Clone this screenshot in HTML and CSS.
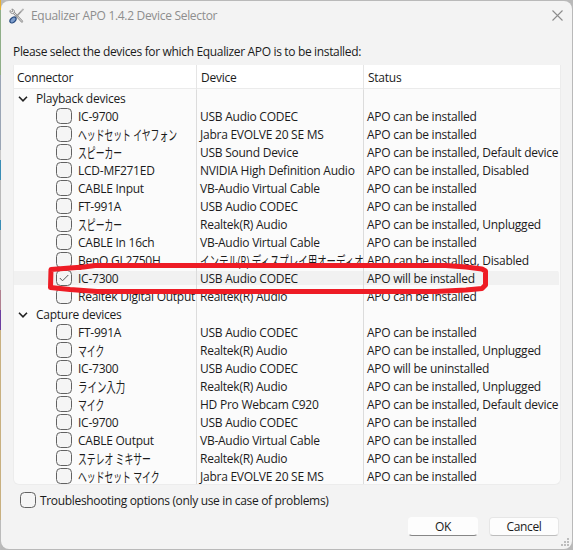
FILE: index.html
```html
<!DOCTYPE html>
<html lang="en">
<head>
<meta charset="UTF-8">
<title>Equalizer APO 1.4.2 Device Selector</title>
<link rel="stylesheet" href="styles.css">
</head>
<body>

<div class="window">
  <div class="titlebar">
    <svg class="app-icon" width="16" height="16" viewBox="0 0 16 16" fill="none">
      <path d="M4.5 4.5L13 13.5" stroke="#8a8a8a" stroke-width="2.4" stroke-linecap="round"/>
      <path d="M4.5 4.5L13 13.5" stroke="#e4e4e4" stroke-width="1" stroke-linecap="round"/>
      <path d="M1 2.5C.5 5 3 6.500 5 5C6.200 3.500 5 1 2.800 1L4 3L2.800 4Z" fill="#eee" stroke="#8a8a8a" stroke-width=".9"/>
      <path d="M6.500 9.500L12 3.500L14.500 1" stroke="#999" stroke-width="1.700"/>
      <path d="M12 3.500L14.700 .8" stroke="#ddd" stroke-width=".8"/>
      <ellipse cx="4" cy="12" rx="3.500" ry="2.300" transform="rotate(-42 4 12)" fill="#7f9fce" stroke="#24497f" stroke-width="1.200"/>
    </svg>
    <span class="title">Equalizer APO 1.4.2 Device Selector</span>
    <svg class="close" width="11" height="11" viewBox="0 0 11 11"><path d="M.5 .5L10.500 10.500M10.500 .5L.5 10.500" stroke="#8c8c8c" stroke-width="1.100"/></svg>
  </div>

  <p class="prompt">Please select the devices for which Equalizer APO is to be installed:</p>

  <div class="tree">
    <div class="head"><span>Connector</span><span>Device</span><span>Status</span></div>
    <div class="body">
      <div class="row group"><span><svg width="10" height="6" viewBox="0 0 10 6"><path d="M1 .8L5 4.800L9 .8" fill="none" stroke="#222" stroke-width="1.600"/></svg>Playback devices</span><span></span><span></span></div>
      <div class="row"><span><i class="box"></i>IC-9700</span><span>USB Audio CODEC</span><span>APO can be installed</span></div>
      <div class="row"><span><i class="box"></i><b class="jp">ヘッドセット イヤフォン</b></span><span>Jabra EVOLVE 20 SE MS</span><span>APO can be installed</span></div>
      <div class="row"><span><i class="box"></i><b class="jp">スピーカー</b></span><span>USB Sound Device</span><span>APO can be installed, Default device</span></div>
      <div class="row"><span><i class="box"></i>LCD-MF271ED</span><span>NVIDIA High Definition Audio</span><span>APO can be installed, Disabled</span></div>
      <div class="row"><span><i class="box"></i>CABLE Input</span><span>VB-Audio Virtual Cable</span><span>APO can be installed</span></div>
      <div class="row"><span><i class="box"></i>FT-991A</span><span>USB Audio CODEC</span><span>APO can be installed</span></div>
      <div class="row"><span><i class="box"></i><b class="jp">スピーカー</b></span><span>Realtek(R) Audio</span><span>APO can be installed, Unplugged</span></div>
      <div class="row"><span><i class="box"></i>CABLE In 16ch</span><span>VB-Audio Virtual Cable</span><span>APO can be installed</span></div>
      <div class="row"><span><i class="box"></i>BenQ GL2750H</span><span><b class="jp wide">インテル(R) ディスプレイ用オーディオ</b></span><span>APO can be installed, Disabled</span></div>
      <div class="row selected"><span><i class="box"><svg width="10" height="8" viewBox="0 0 10 8"><path d="M.8 4L3.500 6.800L9.300 1" fill="none" stroke="#555" stroke-width="1"/></svg></i>IC-7300</span><span>USB Audio CODEC</span><span>APO will be installed</span></div>
      <div class="row"><span><i class="box"></i>Realtek Digital Output</span><span>Realtek(R) Audio</span><span>APO can be installed</span></div>
      <div class="row group"><span><svg width="10" height="6" viewBox="0 0 10 6"><path d="M1 .8L5 4.800L9 .8" fill="none" stroke="#222" stroke-width="1.600"/></svg>Capture devices</span><span></span><span></span></div>
      <div class="row"><span><i class="box"></i>FT-991A</span><span>USB Audio CODEC</span><span>APO can be installed</span></div>
      <div class="row"><span><i class="box"></i><b class="jp">マイク</b></span><span>Realtek(R) Audio</span><span>APO can be installed, Unplugged</span></div>
      <div class="row"><span><i class="box"></i>IC-7300</span><span>USB Audio CODEC</span><span>APO will be uninstalled</span></div>
      <div class="row"><span><i class="box"></i><b class="jp wide">ライン入力</b></span><span>Realtek(R) Audio</span><span>APO can be installed, Unplugged</span></div>
      <div class="row"><span><i class="box"></i><b class="jp">マイク</b></span><span>HD Pro Webcam C920</span><span>APO can be installed, Default device</span></div>
      <div class="row"><span><i class="box"></i>IC-9700</span><span>USB Audio CODEC</span><span>APO can be installed</span></div>
      <div class="row"><span><i class="box"></i>CABLE Output</span><span>VB-Audio Virtual Cable</span><span>APO can be installed</span></div>
      <div class="row"><span><i class="box"></i><b class="jp">ステレオ ミキサー</b></span><span>Realtek(R) Audio</span><span>APO can be installed</span></div>
      <div class="row"><span><i class="box"></i><b class="jp">ヘッドセット マイク</b></span><span>Jabra EVOLVE 20 SE MS</span><span>APO can be installed</span></div>
    </div>
  </div>

  <label class="trouble"><i class="box"></i>Troubleshooting options (only use in case of problems)</label>

  <div class="buttons">
    <button class="ok">OK</button>
    <button>Cancel</button>
  </div>

  <svg class="grip" width="8" height="8" viewBox="0 0 8 8" fill="#bdbdbd"><path d="M6 0h2v2h-2zM3 3h2v2h-2zM6 3h2v2h-2zM0 6h2v2h-2zM3 6h2v2h-2zM6 6h2v2h-2z"/></svg>
</div>

<!-- hand drawn marker round the checked device -->
<svg class="marker" width="573" height="550" viewBox="0 0 573 550">
  <path d="M84 267L70 268L51 269.500L50.500 287.500L70 289.500L97 291.500H436L466 290L482 288.500L485.500 285V271L482 269L466 267L446 265.500H95L80 267.500" fill="none" stroke="#ee1c25" stroke-width="5" stroke-linejoin="round" stroke-linecap="round"/>
</svg>

</body>
</html>
```
FILE: styles.css
```css
* { box-sizing: border-box; }
body {
  margin: 0;
  width: 573px;
  height: 550px;
  padding: 1px;
  overflow: hidden;
  background: linear-gradient(to right, transparent 1px, #b9b9b9 1px),
    linear-gradient(#e8b030 0 10px, #8fae88 10px 75px, #9aa5b5 75px 150px, #c8c8c8 150px 160px, #3a8db5 160px 180px, #b9b9b9 180px 220px, #3a8db5 220px 230px, #bbb 230px 290px, #b08090 290px 310px, #6c3fa0 310px 330px, #c8b080 330px 520px, #bbb 520px);
  font-family: "Open Sans", "Noto Sans CJK JP", sans-serif;
  font-size: 12px;
  letter-spacing: -0.25px;
  color: #1b1b1b;
}
.window {
  position: relative;
  display: flex;
  flex-direction: column;
  width: 571px;
  height: 548px;
  padding: 0 12px;
  background: #f3f3f3;
  border-radius: 8px;
}
.titlebar { display: flex; align-items: center; height: 29px; margin: 0 -4px; color: #8e8e8e; }
.title { flex: 1; margin-left: 6px; letter-spacing: -0.31px; }
.close { margin-right: 1px; }
.app-icon { margin-top: 1px; }
.prompt { margin: 13px 0 0; height: 22px; line-height: 17px; white-space: nowrap; letter-spacing: -0.34px; }

.tree { flex: none; width: 548px; height: 420px; background: #fbfbfb; border: 1px solid #ececec; border-top: 0; border-radius: 0 0 6px 6px; overflow: hidden; }
.head, .row { display: grid; grid-template-columns: 183px 167px 1fr; }
.head { height: 24px; background: #fff; border-bottom: 1px solid #ebebeb; line-height: 25px; }
.head span { padding-left: 4px; border-right: 1px solid #e5e5e5; }
.head span:first-child { padding-left: 3px; }
.head span:last-child { border: 0; }
.body { padding-top: 1px; }
.row { height: 18px; line-height: 18px; }
.row > span { display: flex; align-items: center; padding-left: 3px; border-right: 1px solid #dcdcdc; white-space: nowrap; overflow: hidden; }
.row > span:first-child { padding-left: 42px; }
.row > span:last-child { border: 0; }
.row.group > span:first-child { padding-left: 4px; }
.group svg { margin-right: 8px; }
.selected > span { background: linear-gradient(#f1f1f1, #f1f1f1) 0 1px / 100% 14px no-repeat; }
.selected > span:last-child { margin-right: 1px; border-radius: 0 4px 4px 0; }

.box { display: flex; align-items: center; justify-content: center; flex: none; width: 16px; height: 16px; margin: -1px 6px 1px 0; background: #f5f5f5; border: 1px solid #626262; border-radius: 4.5px; }
/* narrow kana */
.jp { flex: none; font-size: 14px; font-weight: normal; letter-spacing: 0; transform: scaleX(0.63); transform-origin: left; }
.jp.wide { transform: scaleX(0.675); }

.trouble { display: flex; align-items: center; height: 16px; margin: 7px 0 0 7px; white-space: nowrap; letter-spacing: -0.33px; }
.trouble .box { margin: 0 4px 0 0; }
.buttons { display: flex; justify-content: flex-end; gap: 11px; margin: 9px 1px 0 0; }
button { width: 70px; height: 19px; padding: 0; font: inherit; letter-spacing: -0.35px; color: inherit; background: #fdfdfd; border: 1px solid #e6e6e6; border-bottom-color: #bdbdbd; border-radius: 4px; line-height: 17px; }
.ok { border-color: #fdfdfd; border-bottom-color: #868686; }
.grip { position: absolute; right: 3px; bottom: 3px; }
.marker { position: absolute; left: 0; top: 0; }
```
